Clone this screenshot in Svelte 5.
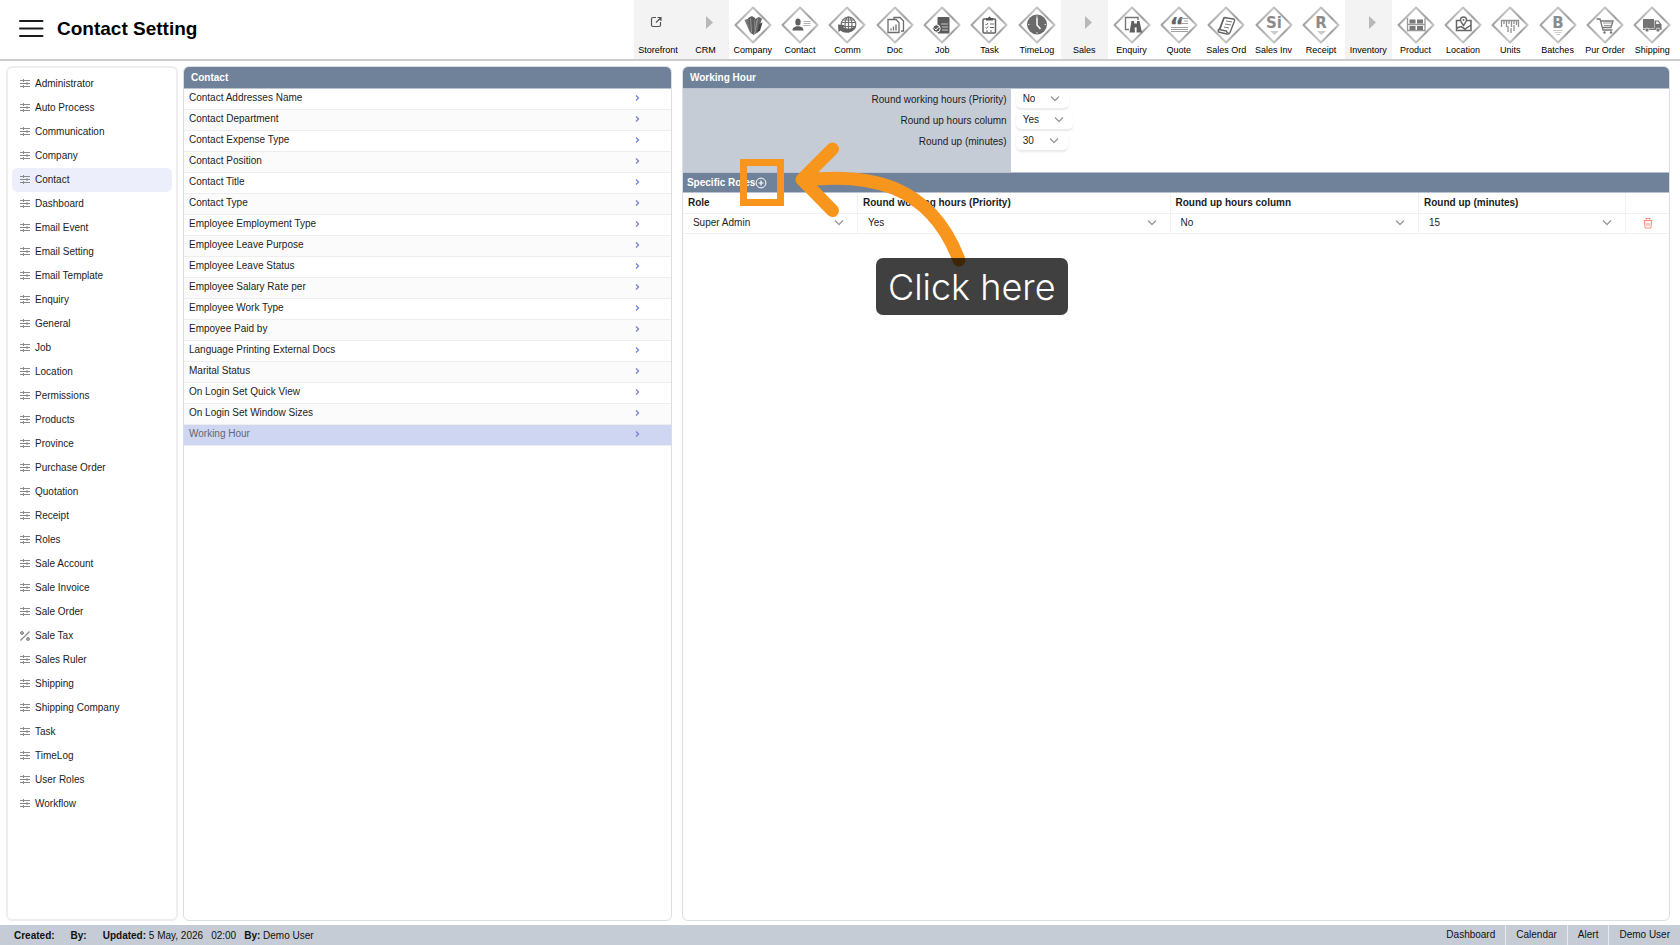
<script>
  const tools = [
    { name: 'Storefront', kind: 'open' },
    { name: 'CRM', kind: 'group' },
    { name: 'Company' },
    { name: 'Contact' },
    { name: 'Comm' },
    { name: 'Doc' },
    { name: 'Job' },
    { name: 'Task' },
    { name: 'TimeLog' },
    { name: 'Sales', kind: 'group' },
    { name: 'Enquiry' },
    { name: 'Quote' },
    { name: 'Sales Ord' },
    { name: 'Sales Inv' },
    { name: 'Receipt' },
    { name: 'Inventory', kind: 'group' },
    { name: 'Product' },
    { name: 'Location' },
    { name: 'Units' },
    { name: 'Batches' },
    { name: 'Pur Order' },
    { name: 'Shipping' }
  ];

  const modules = [
    'Administrator', 'Auto Process', 'Communication', 'Company', 'Contact', 'Dashboard',
    'Email Event', 'Email Setting', 'Email Template', 'Enquiry', 'General', 'Job', 'Location',
    'Permissions', 'Products', 'Province', 'Purchase Order', 'Quotation', 'Receipt', 'Roles',
    'Sale Account', 'Sale Invoice', 'Sale Order', 'Sale Tax', 'Sales Ruler', 'Shipping',
    'Shipping Company', 'Task', 'TimeLog', 'User Roles', 'Workflow'
  ];

  const settings = [
    'Contact Addresses Name', 'Contact Department', 'Contact Expense Type', 'Contact Position',
    'Contact Title', 'Contact Type', 'Employee Employment Type', 'Employee Leave Purpose',
    'Employee Leave Status', 'Employee Salary Rate per', 'Employee Work Type', 'Empoyee Paid by',
    'Language Printing External Docs', 'Marital Status', 'On Login Set Quick View',
    'On Login Set Window Sizes', 'Working Hour'
  ];

  let activeModule = $state('Contact');
  let activeSetting = $state('Working Hour');
  let priority = $state('No');
  let roundColumn = $state('Yes');
  let minutes = $state('30');
  let role = $state({ name: 'Super Admin', priority: 'Yes', column: 'No', minutes: '15' });
</script>

{#snippet glyph(name)}
  {#if name === 'Company'}
    <g fill="#5c5c5c">
      <path d="M9.500 13l4-1.500 3 14-2-1z" fill="#777" />
      <path d="M13 11l4-2 3 2-1 17-3.500-2z" />
      <path d="M20 12l4-2 3 1.500-4.500 14-4 2.500z" fill="#666" />
      <path d="M24 17l3.500-1.500-2.500 8-3 2.500z" fill="#444" />
      <path d="M15.500 11.500l1 14M22.500 12l-3 15" stroke="#aaa" stroke-width=".8" />
    </g>
  {:else if name === 'Contact'}
    <g fill="#5e5e5e">
      <ellipse cx="16" cy="15" rx="2.700" ry="3.600" />
      <path d="M10.500 23.500c0-3 2-3.500 4.300-4.300h2.400c2.300.8 4.300 1.300 4.300 4.300z" />
    </g>
    <path d="M21.500 14.500h7M21.500 16.500h7M21.500 18.500h7" stroke="#b5b5b5" />
  {:else if name === 'Comm'}
    <g fill="none" stroke="#707070" stroke-width="1.200">
      <circle cx="19.500" cy="17.500" r="7.300" fill="#fff" />
      <ellipse cx="19.500" cy="17.500" rx="3.500" ry="7.300" />
      <path d="M19.500 10.500v14M12.500 15.500h14M12.500 19.500h14M13.500 13h12" />
    </g>
    <path d="M9 17.500l6.500.5-1.500 2c4 2.500 8.500 2 12.500-1-2.500 7-10.500 8.500-15 4.500L9.500 25z" fill="#626262" />
  {:else if name === 'Doc'}
    <g fill="#fff" stroke="#6b6b6b" stroke-width="1.300">
      <path d="M17 12V10.500h6l3.500 3.500v10H24" />
      <path d="M11 12.500h8l3 3v10H11z" />
    </g>
    <path d="M14 23.500v-2M16.500 23.500v-4M19 23.500v-6" stroke="#777" stroke-width="1.400" />
  {:else if name === 'Job'}
    <rect x="13.500" y="10" width="12" height="16.500" rx="1" fill="#5b5b5b" />
    <path d="M17 17h7M18 20h6M18 23h6" stroke="#c8c8c8" />
    <circle cx="12.500" cy="21.500" r="3.700" fill="#5b5b5b" stroke="#fff" />
    <path d="M10.500 21.500l1.500 1.500 3-3.500" fill="none" stroke="#fff" />
  {:else if name === 'Task'}
    <rect x="12" y="12" width="12.500" height="14" rx="1" fill="#fff" stroke="#626262" stroke-width="1.500" />
    <path d="M15 13.500V11h2q1.500-3 3 0h2v2.500z" fill="#555" />
    <path d="M14.500 17l1 1 1.500-2M14.500 20.500l1 1 1.500-2M19 17h4M19 20.500h4M15 24h2M19 24h2" fill="none" stroke="#666" />
  {:else if name === 'TimeLog'}
    <circle cx="18" cy="17.500" r="10" fill="#6a6a6a" />
    <path d="M18 10.500v7.500l3.500 4" fill="none" stroke="#fff" stroke-width="1.500" />
    <path d="M18 8.500v1.500M27 17.500h-1.500M18 26.500v-1.500M9 17.500h1.500" stroke="#ddd" />
  {:else if name === 'Enquiry'}
    <path d="M15 22.500h-3.500V10.500H24V13" fill="none" stroke="#777" stroke-width="1.400" />
    <g fill="#606060">
      <path d="M17.500 14h2.500l1 11.500h-5.500z" />
      <path d="M23 14h2.500l2.500 11.500h-5.500z" />
      <rect x="19.500" y="16.500" width="4.500" height="4" />
    </g>
  {:else if name === 'Quote'}
    <text x="8.500" y="27" class="glyph-text quote">“</text>
    <path d="M20 11.500h7M23 14h4M20 16.500h7M10 20.500h17M10 22.500h17M10 24.500h17" stroke="#a2a2a2" />
  {:else if name === 'Sales Ord'}
    <g fill="#fff" stroke="#666" stroke-width="1.400" stroke-linejoin="round">
      <path d="M16 10.500l9.500 1.500q1.500.5 1 2L22 25.500q-1 2-3 1.500L10.500 25q-1-2 1-3z" />
      <path d="M11 22.500l7.500 1.500q.5 2.500 2.500 2M12 22l4-11" />
    </g>
    <path d="M18 14l6 1M17 17l6 1M16 20l5 1" stroke="#777" />
  {:else if name === 'Sales Inv'}
    <text x="18" y="21" class="glyph-text" text-anchor="middle">Si</text>
    <path d="M14 24h9l-4.500 4z" fill="#ccc" />
  {:else if name === 'Receipt'}
    <text x="18" y="21" class="glyph-text" text-anchor="middle">R</text>
    <path d="M14 24h9l-4.500 4z" fill="#ccc" />
  {:else if name === 'Batches'}
    <text x="18" y="21" class="glyph-text" text-anchor="middle">B</text>
    <path d="M13 23.500h10M14.500 25.500h7M16 27.500h4" stroke="#ccc" />
  {:else if name === 'Product'}
    <path d="M9.500 11v13.500M27 11v13.500M10 17.500h17M10 23.500h17" stroke="#999" stroke-width="1.300" />
    <g fill="#777">
      <rect x="11.500" y="12.500" width="6" height="4" /><rect x="19" y="12.500" width="6" height="4" />
      <rect x="11.500" y="19" width="6" height="4" /><rect x="19" y="19" width="6" height="4" />
    </g>
  {:else if name === 'Location'}
    <path d="M15 13.500h-3.500V23.500H26V13.500h-4M12 21l4-1.500 4 2.500 6-4" fill="none" stroke="#666" stroke-width="1.500" />
    <path d="M18.500 18.500c-2-3-3-4-3-5.500a3 3 0 0 1 6 0c0 1.500-1 2.500-3 5.500z" fill="#fff" stroke="#666" stroke-width="1.400" />
    <circle cx="18.500" cy="13" r="1" fill="#666" />
  {:else if name === 'Units'}
    <path d="M9.500 20v-6.500h17V20M12 14v3M14.500 14v6M17 14v3M19.500 14v6M22 14v3M24.500 14v4M16 19v6M19 21v5M22 18v6" fill="none" stroke="#909090" stroke-width="1.300" />
  {:else if name === 'Pur Order'}
    <path d="M9.500 12h3.500l3 11h9.500M14 14h12l-2 6.500h-8" fill="none" stroke="#777" stroke-width="1.300" />
    <path d="M16 16h9M17 18.500h7.500" stroke="#999" />
    <circle cx="17.500" cy="25.500" r="1.200" fill="#777" /><circle cx="24" cy="25.500" r="1.200" fill="#777" />
  {:else if name === 'Shipping'}
    <g fill="#747474">
      <rect x="9" y="12" width="11" height="9" />
      <path d="M20.500 13.500h4l3 4V22h-7z" />
      <path d="M9 21.500h18.500v1.500H9z" />
      <circle cx="13" cy="23" r="2" stroke="#fff" stroke-width=".7" />
      <circle cx="24" cy="23" r="2" stroke="#fff" stroke-width=".7" />
    </g>
    <path d="M22 14.500h2l1.700 2.500H22z" fill="#eee" />
  {/if}
{/snippet}

<div class="page">
  <header>
    <button class="menu" aria-label="Menu">
      <svg width="26" height="20" viewBox="0 0 26 20">
        <path d="M2 2h22.500M2 9.500h22.500M2 17h22.500" stroke="#1c1c1c" stroke-width="2" stroke-linecap="round" />
      </svg>
    </button>
    <h1>Contact Setting</h1>
    <nav class="tools" aria-label="Modules">
      {#each tools as tool}
        <a href="#{tool.name}" class:shaded={tool.kind}>
          <svg width="38" height="38" viewBox="-1 -1 38 38">
            {#if tool.kind === 'open'}
              <path d="M16 10.500h-3a1.500 1.500 0 0 0-1.500 1.500v6a1.500 1.500 0 0 0 1.500 1.500h6a1.500 1.500 0 0 0 1.500-1.500V15M17.500 10.500h3.500v3.500M21 10.500l-5 5" fill="none" stroke="#555" stroke-width="1.200" />
            {:else if tool.kind === 'group'}
              <path d="M19 9l7 6.500-7 6.500z" fill="#b8b8b8" />
            {:else}
              <defs>
                <linearGradient id="edge" x1="0" y1="0" x2="1" y2="0">
                  <stop offset="0" stop-color="#a0a0a0" />
                  <stop offset=".45" stop-color="#c8c8c8" />
                  <stop offset=".8" stop-color="#9c9c9c" />
                  <stop offset="1" stop-color="#c4c4c4" />
                </linearGradient>
              </defs>
              <path d="M18 .5L35.500 18 18 35.500.5 18z" fill="#fff" stroke="url(#edge)" stroke-width="2" stroke-linejoin="round" />
              {@render glyph(tool.name)}
            {/if}
          </svg>
          <span>{tool.name}</span>
        </a>
      {/each}
    </nav>
  </header>

  <main>
    <nav class="panel modules" aria-label="Settings">
      {#each modules as item}
        <button class:active={item === activeModule} onclick={() => (activeModule = item)}>
          <svg width="10" height="10" viewBox="0 0 10 10" fill="none" stroke="#8a8a8a">
            {#if item === 'Sale Tax'}
              <path d="M9.500 .5L.5 9.500" stroke-width="1.300" /><circle cx="2" cy="2" r="1.500" fill="#aaa" /><circle cx="8" cy="8" r="1.500" fill="#aaa" />
            {:else}
              <path d="M0 1.500h10M0 4.500h10M0 7.500h10" /><path d="M3.500 0v3M7 3v3M3.500 6v3" />
            {/if}
          </svg>
          {item}
        </button>
      {/each}
    </nav>

    <section class="panel list">
      <h2>Contact</h2>
      {#each settings as item}
        <button class:active={item === activeSetting} onclick={() => (activeSetting = item)}>
          <span>{item}</span>
          <svg width="5" height="6" viewBox="0 0 5 6"><path d="M1 .5L3.500 3 1 5.500" fill="none" stroke="#7484d0" stroke-width="1.300" /></svg>
        </button>
      {/each}
    </section>

    <section class="panel detail">
      <h2>Working Hour</h2>
      <form>
        <label for="priority">Round working hours (Priority)</label>
        <div><select id="priority" bind:value={priority}><option>No</option><option>Yes</option></select></div>
        <label for="column">Round up hours column</label>
        <div><select id="column" bind:value={roundColumn}><option>No</option><option>Yes</option></select></div>
        <label for="minutes">Round up (minutes)</label>
        <div><select id="minutes" bind:value={minutes}><option>15</option><option>30</option></select></div>
      </form>
      <h3>
        Specific Roles
        <button class="add" aria-label="Add role">
          <svg width="12" height="12" viewBox="0 0 12 12" fill="none" stroke="#fff"><circle cx="6" cy="6" r="4.900" /><path d="M6 3.500v5M3.500 6h5" stroke-width="1.200" /></svg>
        </button>
      </h3>
      <table>
        <colgroup><col class="c-role" /><col class="c-priority" /><col class="c-column" /><col class="c-minutes" /><col /></colgroup>
        <thead>
          <tr><th>Role</th><th>Round working hours (Priority)</th><th>Round up hours column</th><th>Round up (minutes)</th><th></th></tr>
        </thead>
        <tbody>
          <tr>
            <td><select aria-label="Role" bind:value={role.name}><option>Super Admin</option></select></td>
            <td><select aria-label="Round working hours (Priority)" bind:value={role.priority}><option>Yes</option><option>No</option></select></td>
            <td><select aria-label="Round up hours column" bind:value={role.column}><option>No</option><option>Yes</option></select></td>
            <td><select aria-label="Round up (minutes)" bind:value={role.minutes}><option>15</option><option>30</option></select></td>
            <td class="actions">
              <button aria-label="Delete role">
                <svg width="10" height="11" viewBox="0 0 10 11" fill="none" stroke="#f98a78"><path d="M.5 2.500h9M3 2.500v-2h4v2M1.500 2.500l.5 7.500h6l.5-7.500M4 5v3M6 5v3" /></svg>
              </button>
            </td>
          </tr>
        </tbody>
      </table>

      <div class="hint">
        <div class="frame"></div>
        <svg class="arrow" width="230" height="130" viewBox="0 0 230 130" fill="none" stroke="#f8951d" stroke-width="13" stroke-linecap="round" stroke-linejoin="round">
          <path d="M92.500 8L62 38.500 92.500 69.500M64 39C128 32 190 42 219 119" />
        </svg>
        <div class="bubble">Click here</div>
      </div>
    </section>
  </main>

  <footer>
    <div class="audit">
      <b>Created:</b><b>By:</b><span><b>Updated:</b> 5 May, 2026</span><span>02:00</span><span><b>By:</b> Demo User</span>
    </div>
    <nav aria-label="Shortcuts"><a href="#dashboard">Dashboard</a><a href="#calendar">Calendar</a><a href="#alert">Alert</a><a href="#user">Demo User</a></nav>
  </footer>
</div>

<style>
  :global(body) { background: #fff; }
  .page {
    display: flex;
    flex-direction: column;
    min-height: 100vh;
    font: 10px/14px Arial, "Liberation Sans", sans-serif;
    color: #1c1c1c;
  }
  .page, .page * { box-sizing: border-box; }
  button, select {
    font: inherit;
    color: inherit;
    border: 0;
    margin: 0;
    padding: 0;
    background: none;
  }
  a { color: inherit; text-decoration: none; }
  svg { display: block; }
  h1, h2, h3 { margin: 0; }

  header {
    display: flex;
    align-items: stretch;
    border-bottom: 2px solid #ccc;
  }
  .menu { padding: 0 13px 2px 18px; }
  h1 { font-size: 19px; line-height: 24px; align-self: center; padding-bottom: 2px; color: #000; }
  .tools {
    display: grid;
    grid-template-columns: repeat(22, minmax(0, 1fr));
    width: 62%;
    margin: 0 4px 0 auto;
    font-size: 9px;
    line-height: 12px;
    color: #000;
  }
  .tools a {
    display: flex;
    flex-direction: column;
    align-items: center;
    padding: 6px 0 3px;
    white-space: nowrap;
  }
  .shaded { background: #f3f3f3; }
  .glyph-text { font: bold 15px "DejaVu Sans", sans-serif; fill: #8b8b8b; }
  .quote { font-size: 23px; fill: #666; }

  main {
    flex: 1;
    display: grid;
    grid-template-columns: 172px minmax(0, 489fr) minmax(0, 988fr);
    padding: 5px 10px 4px 6px;
  }
  .panel { border: 1px solid #d9dee6; border-radius: 6px; }
  .modules {
    display: flex;
    flex-direction: column;
    padding: 4px;
    border: 2px solid #eee;
  }
  .modules button {
    display: flex;
    align-items: center;
    gap: 5px;
    height: 24px;
    padding: 0 8px;
    border-radius: 5px;
  }
  .modules .active { background: #eceefb; }

  .list { margin-left: 5px; }
  .detail { margin-left: 10px; position: relative; }
  h2 {
    height: 22px;
    padding: 0 7px;
    border-bottom: 1px solid #b8c2d0;
    border-radius: 5px 5px 0 0;
    background: #70829a;
    color: #fff;
    font-size: 10px;
    line-height: 21px;
  }
  .list button {
    display: flex;
    justify-content: space-between;
    align-items: center;
    width: 100%;
    height: 21px;
    padding: 0 31px 2px 5px;
    border-bottom: 1px solid #eee;
  }
  .list button:nth-of-type(even) { background: #fbfbfb; }
  .list button.active { background: #ced6f1; color: #626775; }

  form {
    display: grid;
    grid-template-columns: 1fr 2fr;
    grid-auto-rows: 21px;
    padding-bottom: 20px;
    background: linear-gradient(90deg, #c6ccd6 33.300%, #fff 33.300%);
  }
  form label { justify-self: end; padding: 4px 5px 0 0; }
  form div { padding-left: 4px; }
  select {
    appearance: none;
    cursor: pointer;
    background: url("data:image/svg+xml,%3Csvg xmlns='http://www.w3.org/2000/svg' width='10' height='6'%3E%3Cpath d='M1 .5l4 4 4-4' fill='none' stroke='%23999' stroke-width='1.300'/%3E%3C/svg%3E") no-repeat right 9px center;
  }
  form select {
    field-sizing: content;
    height: 19px;
    padding: 0 34px 0 7px;
    border-radius: 5px;
    box-shadow: 0 2px 2px rgba(0, 0, 0, 0.09);
  }
  h3 {
    display: flex;
    align-items: center;
    height: 21px;
    padding: 0 4px;
    border: solid #b8c2d0;
    border-width: 1px 0;
    background: #70829a;
    color: #fff;
    font-size: 10px;
  }
  table {
    width: 100%;
    table-layout: fixed;
    border-collapse: collapse;
  }
  .c-role { width: 17.7%; }
  .c-priority { width: 31.7%; }
  .c-column { width: 25.2%; }
  .c-minutes { width: 21%; }
  th, td {
    height: 20px;
    padding: 0 0 0 5px;
    border-bottom: 1px solid #f1f1f1;
    text-align: left;
  }
  th + th, td + td { border-left: 1px solid #f1f1f1; }
  td select {
    width: 100%;
    height: 19px;
    padding: 0 30px 0 5px;
    background-position: right 13px center;
  }
  .actions { padding: 0; }
  .actions button { display: block; margin: 0 auto; }

  .hint { position: absolute; left: 57px; top: 74px; width: 330px; height: 176px; pointer-events: none; }
  .frame { position: absolute; left: 0; top: 18px; width: 44px; height: 47px; border: 7px solid #f8951d; }
  .arrow { position: absolute; left: 0; top: 0; }
  .bubble {
    position: absolute;
    left: 136px;
    top: 117px;
    padding: 5px 12px 4px;
    border-radius: 7px;
    background: rgba(0, 0, 0, 0.75);
    color: #fff;
    font: 300 36px/48px Inter, sans-serif;
    white-space: nowrap;
  }

  footer {
    display: flex;
    justify-content: space-between;
    height: 20px;
    background: #c6ccd6;
    line-height: 20px;
    color: #111;
  }
  .audit { display: flex; gap: 8px; padding: 1px 14px 0; }
  .audit > b { margin-right: 8px; }
  footer nav { display: flex; }
  footer a { padding: 0 10px; }
  footer a + a { border-left: 1px solid #e8ebf0; }
</style>
